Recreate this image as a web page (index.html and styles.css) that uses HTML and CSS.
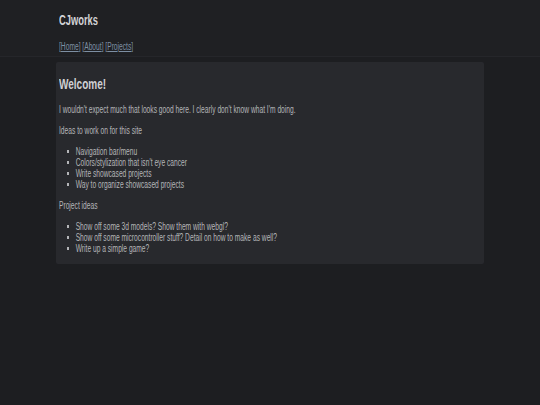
FILE: index.html
```html
<!DOCTYPE html>
<html lang="en">

<head>
    <meta charset="UTF-8">
    <meta name="viewport" content="width=device-width, initial-scale=1.0">
    <title>CJworks</title>
    <link rel="stylesheet" href="styles.css">
</head>

<body>
    <header class="site_header">
        <div class="wrap">
            <h1>CJworks</h1>
            <nav class="nav">
                [<a href="#">Home</a>] [<a href="#">About</a>] [<a href="#">Projects</a>]
            </nav>
        </div>
    </header>

    <main class="wrap content">
        <h2>Welcome!</h2>
        <p>I wouldn't expect much that looks good here. I clearly don't know what I'm doing.</p>
        <p>Ideas to work on for this site</p>
        <ul>
            <li>Navigation bar/menu</li>
            <li>Colors/stylization that isn't eye cancer</li>
            <li>Write showcased projects</li>
            <li>Way to organize showcased projects</li>
        </ul>
        <p>Project ideas</p>
        <ul>
            <li>Show off some 3d models? Show them with webgl?</li>
            <li>Show off some microcontroller stuff? Detail on how to make as well?</li>
            <li>Write up a simple game?</li>
        </ul>
    </main>
</body>

</html>
```

FILE: styles.css
```css
html {
    background-color: #1d1e21;
}

body {
    margin: 0;
    font-family: "Liberation Sans", Arial, sans-serif;
    font-size: 10px;
    color: #b4b5b8;
}

.wrap {
    width: 428px;
    margin: 0 auto;
    padding: 0 3px;
    box-sizing: border-box;
}

/* narrow type: text blocks are squeezed sideways */
.wrap > * {
    transform: scaleX(0.6667);
    transform-origin: left center;
}

.site_header {
    background-color: #1f2023;
    border-bottom: 1px solid #25262a;
    padding: 12px 0 4px;
}

.site_header h1 {
    font-size: 14px;
    margin: 0 0 13px;
    color: #d2d3d6;
}

.nav {
    color: #7d8c9c;
}

.nav a {
    color: #7d8fa3;
}

.content {
    margin-top: 4.5px;
    background-color: #28292d;
    border-radius: 2px;
    padding-top: 1px;
    padding-bottom: 0.5px;
}

.content h2 {
    font-size: 15px;
    color: #cfd0d3;
    margin: 12px 0;
}

.content p {
    margin: 10px 0;
}

.content ul {
    margin: 10px 0;
    padding-left: 25px;
    list-style-type: square;
}
```
